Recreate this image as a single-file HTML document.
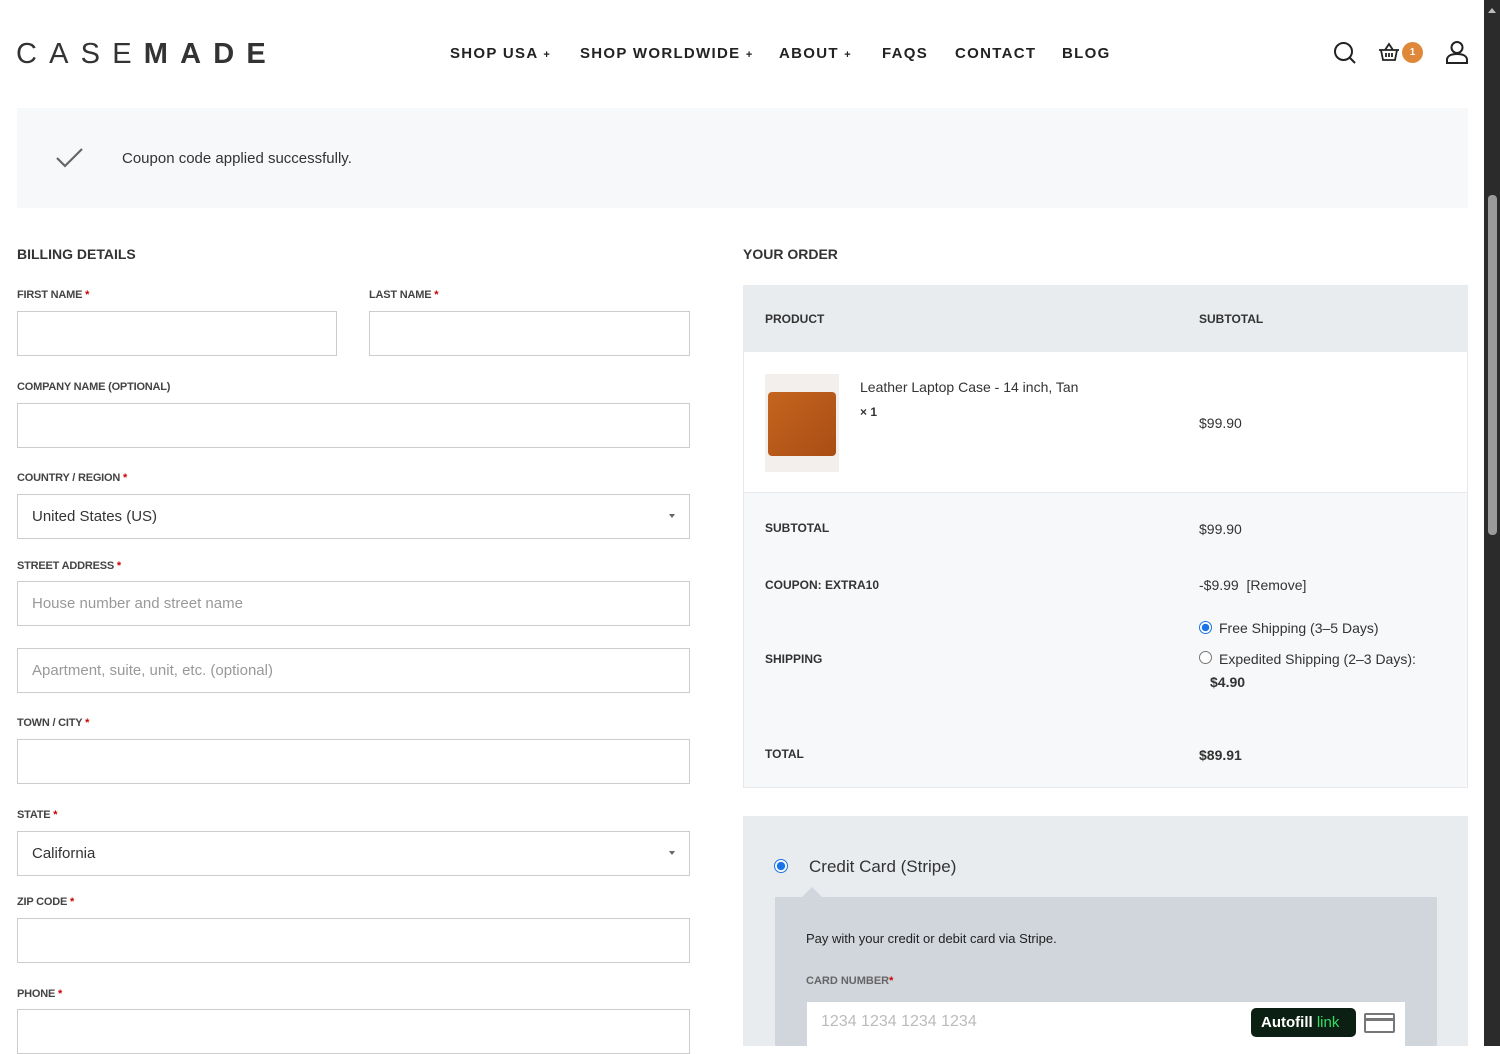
<!DOCTYPE html>
<html><head><meta charset="utf-8"><style>
*{margin:0;padding:0;box-sizing:border-box}
body{width:1500px;height:1046px;overflow:hidden;background:#fff;font-family:"Liberation Sans",sans-serif;color:#333;position:relative}
.a{position:absolute}
.nav{font-size:15px;letter-spacing:1.3px;color:#222;font-weight:bold;top:45px}
.lbl{font-size:11px;font-weight:bold;color:#444;letter-spacing:-.2px}
.lbl b{color:#c00}
.inp{border:1px solid #ccc;background:#fff;height:45px;font-size:15px;padding:0 14px;line-height:43px;color:#333}
.ph{color:#999}
.sel:after{content:"";position:absolute;right:14px;top:19px;border:3px solid transparent;border-top:4px solid #666}
.th{font-size:12px;font-weight:bold;color:#333}
.td{font-size:14px;color:#333}
</style></head><body>
<div class="a" style="left:16px;top:38px;font-size:29px;letter-spacing:12.2px;color:#333;white-space:nowrap"><span style="font-weight:normal">CASE</span><span style="font-weight:bold">MADE</span></div>
<div class="a nav" style="left:450px">SHOP USA <span style="font-size:11px">+</span></div>
<div class="a nav" style="left:580px">SHOP WORLDWIDE <span style="font-size:11px">+</span></div>
<div class="a nav" style="left:779px">ABOUT <span style="font-size:11px">+</span></div>
<div class="a nav" style="left:882px">FAQS</div>
<div class="a nav" style="left:955px">CONTACT</div>
<div class="a nav" style="left:1062px">BLOG</div>
<svg class="a" style="left:1333px;top:41px" width="24" height="24" viewBox="0 0 24 24" fill="none" stroke="#222" stroke-width="2"><circle cx="10.5" cy="10.5" r="8.5"/><path d="M17 17l5 5"/></svg>
<svg class="a" style="left:1378px;top:42px" width="22" height="20" viewBox="0 0 22 20" fill="none" stroke="#222" stroke-width="1.8"><path d="M1 8h20M3 8l2 10h12l2-10M7 8l4-6 4 6M8 11v4M11 11v4M14 11v4"/></svg>
<div class="a" style="left:1402px;top:42px;width:21px;height:21px;border-radius:50%;background:#e0883a;color:#fff;font-size:10px;text-align:center;line-height:21px;font-weight:bold">1</div>
<svg class="a" style="left:1445px;top:40px" width="24" height="24" viewBox="0 0 24 24" fill="none" stroke="#222" stroke-width="2"><circle cx="12" cy="7.5" r="5.5"/><path d="M2 23v-3c0-4 4-6 10-6s10 2 10 6v3z"/></svg>
<div class="a" style="left:1484px;top:0;width:16px;height:1046px;background:#2b2b2b"></div>
<div class="a" style="left:1488px;top:195px;width:9px;height:340px;background:#9a9a9a;border-radius:4px"></div>
<div class="a" style="left:1488px;top:4px;border:4px solid transparent;border-bottom:5px solid #bbb"></div>

<div class="a" style="left:17px;top:108px;width:1451px;height:100px;background:#f7f8fa"></div>
<svg class="a" style="left:55px;top:147px" width="30" height="22" viewBox="0 0 30 22" fill="none" stroke="#666" stroke-width="2.2"><path d="M2 11l8 8L27 2"/></svg>
<div class="a" style="left:122px;top:150px;font-size:15px;color:#333">Coupon code applied successfully.</div>

<div class="a" style="left:17px;top:246px;font-size:14px;font-weight:bold;color:#333">BILLING DETAILS</div>
<div class="a lbl" style="left:17px;top:289px">FIRST NAME <b>*</b></div>
<div class="a lbl" style="left:369px;top:289px">LAST NAME <b>*</b></div>
<div class="a inp" style="left:17px;top:311px;width:320px"></div>
<div class="a inp" style="left:369px;top:311px;width:321px"></div>
<div class="a lbl" style="left:17px;top:381px">COMPANY NAME (OPTIONAL)</div>
<div class="a inp" style="left:17px;top:403px;width:673px"></div>
<div class="a lbl" style="left:17px;top:472px">COUNTRY / REGION <b>*</b></div>
<div class="a inp sel" style="left:17px;top:494px;width:673px">United States (US)</div>
<div class="a lbl" style="left:17px;top:560px">STREET ADDRESS <b>*</b></div>
<div class="a inp ph" style="left:17px;top:581px;width:673px">House number and street name</div>
<div class="a inp ph" style="left:17px;top:648px;width:673px">Apartment, suite, unit, etc. (optional)</div>
<div class="a lbl" style="left:17px;top:717px">TOWN / CITY <b>*</b></div>
<div class="a inp" style="left:17px;top:739px;width:673px"></div>
<div class="a lbl" style="left:17px;top:809px">STATE <b>*</b></div>
<div class="a inp sel" style="left:17px;top:831px;width:673px">California</div>
<div class="a lbl" style="left:17px;top:896px">ZIP CODE <b>*</b></div>
<div class="a inp" style="left:17px;top:918px;width:673px"></div>
<div class="a lbl" style="left:17px;top:988px">PHONE <b>*</b></div>
<div class="a inp" style="left:17px;top:1009px;width:673px"></div>

<div class="a" style="left:743px;top:246px;font-size:14px;font-weight:bold;color:#333">YOUR ORDER</div>
<div class="a" style="left:743px;top:285px;width:725px;height:503px;border:1px solid #e6e8ec;background:#f7f8fa"></div>
<div class="a" style="left:743px;top:285px;width:725px;height:67px;background:#e9ecef"></div>
<div class="a" style="left:744px;top:352px;width:723px;height:141px;background:#fff;border-bottom:1px solid #e6e8ec"></div>
<div class="a th" style="left:765px;top:312px">PRODUCT</div>
<div class="a th" style="left:1199px;top:312px">SUBTOTAL</div>
<div class="a" style="left:765px;top:374px;width:74px;height:98px;background:#f2efec"></div>
<div class="a" style="left:768px;top:392px;width:68px;height:64px;background:linear-gradient(135deg,#c5651f,#a84d14);border-radius:4px"></div>
<div class="a td" style="left:860px;top:379px">Leather Laptop Case - 14 inch, Tan</div>
<div class="a" style="left:860px;top:405px;font-size:12px;font-weight:bold">× 1</div>
<div class="a td" style="left:1199px;top:415px">$99.90</div>
<div class="a th" style="left:765px;top:521px">SUBTOTAL</div>
<div class="a td" style="left:1199px;top:521px">$99.90</div>
<div class="a th" style="left:765px;top:578px">COUPON: EXTRA10</div>
<div class="a td" style="left:1199px;top:577px">-$9.99 &nbsp;[Remove]</div>
<div class="a th" style="left:765px;top:652px">SHIPPING</div>
<div class="a" style="left:1199px;top:621px;width:13px;height:13px;border-radius:50%;border:1px solid #1a73e8;background:radial-gradient(#1a73e8 45%,#fff 50%)"></div>
<div class="a td" style="left:1219px;top:620px">Free Shipping (3–5 Days)</div>
<div class="a" style="left:1199px;top:651px;width:13px;height:13px;border-radius:50%;border:1px solid #777;background:#fff"></div>
<div class="a td" style="left:1219px;top:651px">Expedited Shipping (2–3 Days):</div>
<div class="a td" style="left:1210px;top:674px;font-weight:bold">$4.90</div>
<div class="a th" style="left:765px;top:747px">TOTAL</div>
<div class="a td" style="left:1199px;top:747px;font-weight:bold">$89.91</div>

<div class="a" style="left:743px;top:816px;width:725px;height:230px;background:#e9ecef"></div>
<div class="a" style="left:774px;top:859px;width:14px;height:14px;border-radius:50%;border:1px solid #1a73e8;background:radial-gradient(#1a73e8 45%,#fff 52%)"></div>
<div class="a" style="left:809px;top:857px;font-size:17px;color:#333">Credit Card (Stripe)</div>
<div class="a" style="left:775px;top:897px;width:662px;height:149px;background:#d1d5dc"></div>
<div class="a" style="left:802px;top:887px;border:10px solid transparent;border-bottom:10px solid #d1d5dc;border-top:0"></div>
<div class="a" style="left:806px;top:931px;font-size:13px;color:#222">Pay with your credit or debit card via Stripe.</div>
<div class="a" style="left:806px;top:975px;font-size:11px;font-weight:bold;color:#666">CARD NUMBER<b style="color:#c00">*</b></div>
<div class="a" style="left:807px;top:1002px;width:598px;height:44px;background:#fff"></div>
<div class="a" style="left:821px;top:1013px;font-size:16px;color:#bbb">1234 1234 1234 1234</div>
<div class="a" style="left:1251px;top:1008px;width:105px;height:29px;background:#0b2012;border-radius:5px;color:#fff;font-size:15px;font-weight:bold;line-height:29px;padding-left:10px">Autofill <span style="color:#33dd66;font-weight:normal">link</span></div>
<div class="a" style="left:1364px;top:1013px;width:31px;height:20px;border:2px solid #777;border-radius:2px;background:linear-gradient(#fff 3px,#777 3px,#777 6px,#fff 6px)"></div>
</body></html>
